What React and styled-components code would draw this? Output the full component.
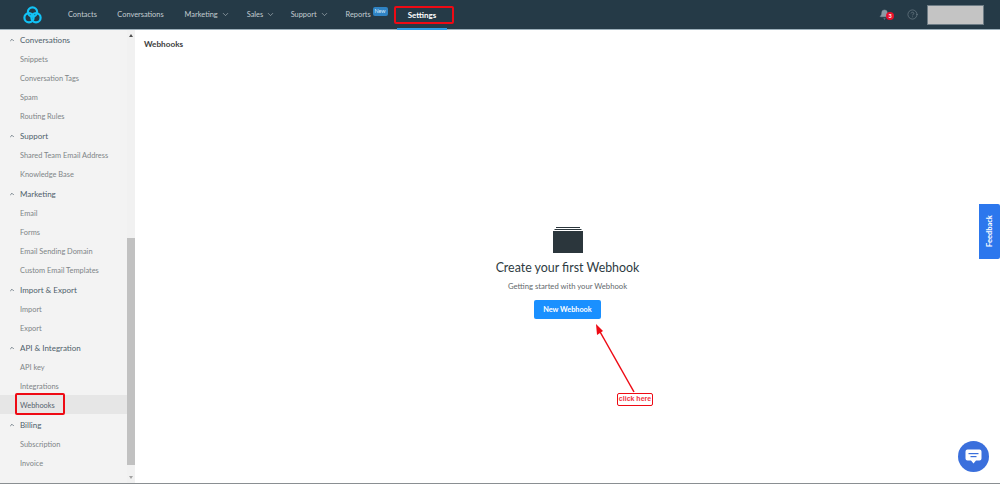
import React from "react";
import styled, { createGlobalStyle } from "styled-components";
import { ChevronDown, ChevronUp, Bell, CircleHelp } from "lucide-react";

const Global = createGlobalStyle`
  html, body { margin: 0; padding: 0; background: #fff; overflow: hidden; }
  body { font-family: Lato, "Liberation Sans", sans-serif; }
`;
const Page = styled.div`
  position: relative; width: 1000px; height: 484px; overflow: hidden;
  display: flex; flex-direction: column;
  border-bottom: 1px solid #8a8f92; box-sizing: border-box;
`;
const TopBar = styled.header`
  height: 30px; flex: none; background: #253a47; display: flex; align-items: center;
  border-bottom: 1px solid #9db0bb; box-sizing: border-box; padding: 0 16px 0 23px; color: #c9d1d6;
`;
const Logo = styled.svg` width: 19px; height: 18px; margin-right: 26px; `;
const Nav = styled.nav` display: flex; align-items: center; height: 100%; flex: 1; `;
const NavItem = styled.a`
  position: relative; display: flex; align-items: center; gap: 3px; height: 100%;
  font-size: ${p => (p.$active ? 8 : 7.4)}px; font-weight: ${p => (p.$active ? 700 : 400)};
  color: ${p => (p.$active ? "#fff" : "#c3ccd1")};
  margin-right: ${p => p.$gap}px; white-space: nowrap;
`;
const ActiveBar = styled.span`
  position: absolute; left: -11px; right: -11px; bottom: -1px; height: 2px; background: #2f9fe8;
`;
const NewBadge = styled.span`
  position: absolute; left: 27px; top: 7px; width: 15px; height: 9px; background: #2f83c4; border-radius: 2px;
  color: #d8ecfa; font-size: 5.5px; line-height: 8px; text-align: center;
`;
const Right = styled.div` display: flex; align-items: center; `;
const BellWrap = styled.div` position: relative; display: flex; margin-right: 17px; color: #8b9aa4; `;
const Count = styled.span`
  position: absolute; left: 7px; top: 3px; width: 8px; height: 8px; border-radius: 50%;
  background: #e8112d; color: #fff; font-size: 5.5px; font-weight: 700; line-height: 8px; text-align: center;
`;
const Avatar = styled.div` width: 57px; height: 20px; background: #c4c4c4; margin-left: 9px; border: 1px solid #6d7c85; box-sizing: border-box; `;
const Body = styled.div` flex: 1; display: flex; min-height: 0; `;
const Sidebar = styled.aside`
  width: 135px; flex: none; background: #f3f3f3; display: flex;
`;
const Menu = styled.div` flex: 1; min-width: 0; `;
const Section = styled.section` padding-bottom: 1px; `;
const Heading = styled.div`
  height: 19px; display: flex; align-items: center; font-size: 8px; color: #4f5f6b; padding-left: 9px; gap: 5px;
`;
const Item = styled.div`
  height: 19px; box-sizing: border-box; display: flex; align-items: center; padding: 2px 0 0 20px; font-size: 7.4px;
  color: ${p => (p.$active ? "#55636e" : "#808587")};
  background: ${p => (p.$active ? "#e6e6e6" : "transparent")};
`;
const Track = styled.div`
  width: 8px; flex: none; display: flex; flex-direction: column; background: #f1f1f1;
  align-items: center; justify-content: space-between;
`;
const Arrow = styled.div`
  width: 0; height: 0; margin: 4px 0;
  border-left: 2.5px solid transparent; border-right: 2.5px solid transparent;
  ${p => (p.$down ? "border-top: 3px solid #a3a3a3;" : "border-bottom: 3px solid #505050;")}
`;
const Spacer = styled.div` height: 197px; `;
const Thumb = styled.div` width: 100%; height: 227px; background: #c1c1c1; `;
const TrackFill = styled.div` flex: 1; display: flex; flex-direction: column; width: 100%; `;
const Main = styled.main` flex: 1; position: relative; display: flex; flex-direction: column; align-items: center; `;
const Title = styled.h1`
  align-self: flex-start; margin: 9px 0 0 9px; font-size: 8.2px; line-height: 11px; font-weight: 700; color: #3d3d3d;
`;
const Empty = styled.div`
  display: flex; flex-direction: column; align-items: center; margin-top: 177px;
`;
const EmptyIcon = styled.svg` width: 30px; height: 26px; `;
const EmptyTitle = styled.h2`
  margin: 6px 0 0; font-size: 12.4px; line-height: 18px; font-weight: 400; color: #2e3b42;
`;
const EmptySub = styled.p`
  margin: 3px 0 0; font-size: 7.7px; line-height: 12px; color: #63696d;
`;
const Primary = styled.button`
  margin-top: 8px; width: 67px; height: 19px; border: 0; border-radius: 2px; background: #1a90ff; color: #fff;
  font-family: Lato, sans-serif; font-size: 7.3px; font-weight: 700; padding: 0;
`;
const Feedback = styled.div`
  position: absolute; right: 0; top: 204px; width: 21px; height: 55px; background: #2c77ed; border-radius: 2px 0 0 2px;
  color: #fff; font-size: 7.5px; font-weight: 700; display: flex; align-items: center; justify-content: center;
  writing-mode: vertical-rl; transform: rotate(180deg);
`;
const ChatBubble = styled.div`
  position: absolute; left: 958px; top: 441px; width: 31px; height: 31px; border-radius: 50%;
  background: #3a6fdc; display: flex; align-items: center; justify-content: center;
`;
const RedBox = styled.div`
  position: absolute; border: 2px solid #ee0a14; border-radius: 2px; box-sizing: border-box; pointer-events: none;
  left: ${p => p.$x}px; top: ${p => p.$y}px; width: ${p => p.$w}px; height: ${p => p.$h}px;
`;
const ClickHere = styled.div`
  position: absolute; left: 617px; top: 393px; width: 36px; height: 13px; box-sizing: border-box;
  border: 1.5px solid #ee0a14; border-radius: 2px; background: #fff; color: #f0343f; white-space: nowrap;
  font-size: 7px; font-weight: 700; line-height: 10px; text-align: center; font-family: "Liberation Sans", sans-serif;
`;
const Overlay = styled.svg` position: absolute; left: 0; top: 0; pointer-events: none; `;

const sections = [
  ["Conversations", ["Snippets", "Conversation Tags", "Spam", "Routing Rules"]],
  ["Support", ["Shared Team Email Address", "Knowledge Base"]],
  ["Marketing", ["Email", "Forms", "Email Sending Domain", "Custom Email Templates"]],
  ["Import & Export", ["Import", "Export"]],
  ["API & Integration", ["API key", "Integrations", "Webhooks"]],
  ["Billing", ["Subscription", "Invoice"]],
];
const navs = [
  ["Contacts", 20.5], ["Conversations", 21], ["Marketing", 17, true], ["Sales", 15.5, true], ["Support", 17, true],
];

export default function App() {
  return (
    <Page>
      <Global />
      <TopBar>
        <Logo viewBox="0 0 19 18" fill="none" stroke="#12c2f5" strokeWidth="2.2">
          <circle cx="9.5" cy="6" r="4.6" />
          <circle cx="6" cy="11.8" r="4.6" />
          <circle cx="13" cy="11.8" r="4.6" />
        </Logo>
        <Nav>
          {navs.map(([t, g, c]) => (
            <NavItem key={t} $gap={g}>
              {t}
              {c && <ChevronDown size={9} strokeWidth={1.5} />}
            </NavItem>
          ))}
          <NavItem $gap={37}>
            Reports
            <NewBadge>New</NewBadge>
          </NavItem>
          <NavItem $active $gap={0}>
            Settings
            <ActiveBar />
          </NavItem>
        </Nav>
        <Right>
          <BellWrap>
            <Bell size={11} fill="#8b9aa4" strokeWidth={1} />
            <Count>3</Count>
          </BellWrap>
          <CircleHelp size={11} strokeWidth={1} color="#8f9ea8" />
          <Avatar />
        </Right>
      </TopBar>
      <Body>
        <Sidebar>
          <Menu>
            {sections.map(([h, items]) => (
              <Section key={h}>
                <Heading>
                  <ChevronUp size={6} strokeWidth={3} />
                  {h}
                </Heading>
                {items.map(i => (
                  <Item key={i} $active={i === "Webhooks"}>{i}</Item>
                ))}
              </Section>
            ))}
          </Menu>
          <Track>
            <Arrow />
            <TrackFill>
              <Spacer />
              <Thumb />
            </TrackFill>
            <Arrow $down />
          </Track>
        </Sidebar>
        <Main>
          <Title>Webhooks</Title>
          <Empty>
            <EmptyIcon viewBox="0 0 30 26">
              <rect x="3" y="0" width="24" height="1" fill="#2b363c" />
              <rect x="1.5" y="2" width="27" height="1" fill="#2b363c" />
              <rect x="0" y="4" width="30" height="22" fill="#2b363c" />
            </EmptyIcon>
            <EmptyTitle>Create your first Webhook</EmptyTitle>
            <EmptySub>Getting started with your Webhook</EmptySub>
            <Primary>New Webhook</Primary>
          </Empty>
        </Main>
      </Body>
      <Feedback>Feedback</Feedback>
      <ChatBubble>
        <svg width="17" height="15" viewBox="0 0 17 15">
          <path d="M2.5 0.5h12a2 2 0 0 1 2 2v7a2 2 0 0 1-2 2h-3.5l-2.5 3-2.5-3h-3.5a2 2 0 0 1-2-2v-7a2 2 0 0 1 2-2z" fill="#fff" />
          <rect x="3.5" y="4" width="10" height="1.2" fill="#3a6fdc" />
          <rect x="5.5" y="7" width="6" height="1.2" fill="#3a6fdc" />
        </svg>
      </ChatBubble>
      <RedBox $x={394} $y={6} $w={60} $h={18} />
      <RedBox $x={15} $y={393} $w={50} $h={22} />
      <Overlay width="1000" height="484">
        <line x1="634" y1="392" x2="599" y2="330" stroke="#ee0a14" strokeWidth="1.5" />
        <polygon points="596,324 603,331 597,335" fill="#ee0a14" />
      </Overlay>
      <ClickHere>click here</ClickHere>
    </Page>
  );
}
